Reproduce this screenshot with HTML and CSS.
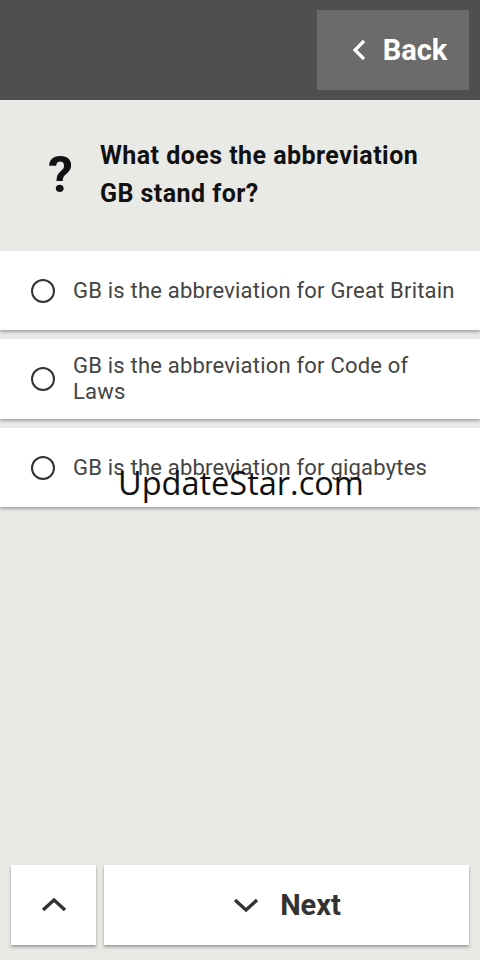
FILE: index.html
```html
<!DOCTYPE html>
<html lang="en">
<head>
  <meta charset="UTF-8">
  <title>Quiz</title>
  <link rel="stylesheet" href="styles.css">
</head>
<body>
  <div class="app">
    <header class="topbar">
      <button class="btn-back">
        <svg width="20" height="24" viewBox="0 0 20 24"><path d="M15 3 L6 12 L15 21" fill="none" stroke="#fff" stroke-width="3.2"/></svg>
        <span>Back</span>
      </button>
    </header>

    <section class="question">
      <div class="qmark">?</div>
      <h1>What does the abbreviation GB stand for?</h1>
    </section>

    <ul class="answers">
      <li class="answer"><span class="radio"></span><span>GB is the abbreviation for Great Britain</span></li>
      <li class="answer"><span class="radio"></span><span>GB is the abbreviation for Code of Laws</span></li>
      <li class="answer"><span class="radio"></span><span>GB is the abbreviation for gigabytes</span></li>
    </ul>

    <div class="spacer"></div>

    <footer class="nav">
      <button class="btn-prev">
        <svg width="28" height="20" viewBox="0 0 28 20"><path d="M3 15 L14 5 L25 15" fill="none" stroke="#333" stroke-width="3.4"/></svg>
      </button>
      <button class="btn-next">
        <svg width="28" height="20" viewBox="0 0 28 20"><path d="M3 5 L14 15 L25 5" fill="none" stroke="#333" stroke-width="3.4"/></svg>
        <span>Next</span>
      </button>
    </footer>

    <div class="watermark">UpdateStar.com</div>
  </div>
</body>
</html>
```

FILE: styles.css
```css
body {
  margin: 0;
  font-family: Roboto, "Liberation Sans", sans-serif;
  background: #e9e9e6;
}
.app {
  position: relative;
  height: 960px;
  display: flex;
  flex-direction: column;
}
.topbar {
  height: 100px;
  background: #4f4f4f;
  display: flex;
  justify-content: flex-end;
  padding: 10px 11px 10px 0;
  box-sizing: border-box;
}
.btn-back {
  width: 152px;
  height: 80px;
  border: none;
  background: #6b6b6b;
  color: #fff;
  font-family: inherit;
  font-size: 29px;
  font-weight: bold;
  display: flex;
  align-items: center;
  justify-content: center;
  gap: 14px;
  padding: 0 0 0 10px;
}
.question {
  display: flex;
  align-items: center;
  padding: 35px 40px 36px 48px;
  min-height: 80px;
}
.qmark {
  width: 52px;
  font-size: 50px;
  line-height: 50px;
  font-weight: bold;
  color: #111;
  flex-shrink: 0;
}
.question h1 {
  margin: 0;
  font-size: 25px;
  letter-spacing: 0.45px;
  line-height: 38px;
  font-weight: bold;
  color: #111;
}
.answers {
  list-style: none;
  margin: 0;
  padding: 0;
  display: flex;
  flex-direction: column;
  gap: 9px;
}
.answer {
  background: #fff;
  min-height: 79px;
  display: flex;
  align-items: center;
  gap: 18px;
  padding: 0 22px 0 31px;
  box-sizing: border-box;
  font-size: 22px;
  letter-spacing: 0.2px;
  line-height: 26px;
  color: #444;
  box-shadow: 0 2px 3px rgba(0, 0, 0, 0.3);
}
.answer:nth-child(2) {
  min-height: 80px;
}
.radio {
  width: 20px;
  height: 20px;
  border: 2.4px solid #333;
  border-radius: 50%;
  flex-shrink: 0;
}
.spacer {
  flex: 1;
}
.nav {
  display: flex;
  gap: 8px;
  padding: 0 11px 15px 11px;
}
.nav button {
  height: 80px;
  border: none;
  background: #fff;
  box-shadow: 0 2px 3px rgba(0, 0, 0, 0.35);
  display: flex;
  align-items: center;
  justify-content: center;
  font-family: inherit;
}
.btn-prev {
  width: 85px;
}
.btn-next {
  flex: 1;
  gap: 20px;
  font-size: 29px;
  font-weight: bold;
  color: #333;
}
.watermark {
  position: absolute;
  top: 460px;
  left: 118px;
  font-family: "Open Sans", sans-serif;
  font-size: 32.5px;
  color: #111;
}
```
